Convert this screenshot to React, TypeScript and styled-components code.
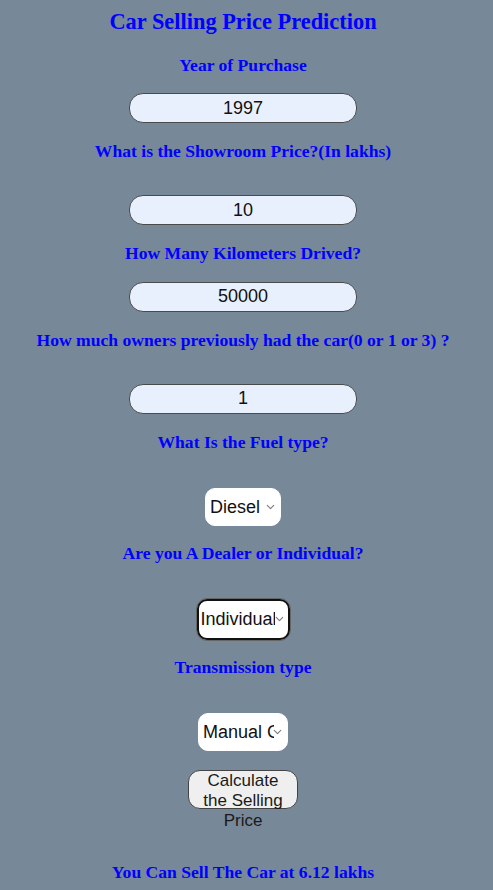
import React from 'react';
import styled, { createGlobalStyle } from 'styled-components';
import { ChevronDown } from 'lucide-react';

const GlobalStyle = createGlobalStyle`
  html, body {
    margin: 0;
    padding: 0;
    background: #778899;
  }
`;

interface DropdownProps {
  width: number;
  focused?: boolean;
  value: string;
  options: string[];
}

function Dropdown({ width, focused, value, options }: DropdownProps): JSX.Element {
  return (
    <SelectWrap>
      <Select $w={width} $focused={focused} defaultValue={value}>
        {options.map((o) => (
          <option key={o}>{o}</option>
        ))}
      </Select>
      <Chevron size={13} strokeWidth={2} />
    </SelectWrap>
  );
}

function App(): JSX.Element {
  return (
    <>
      <GlobalStyle />
      <Page>
        <Title>Car Selling Price Prediction</Title>
        <Label>Year of Purchase</Label>
        <Field value="1997" readOnly />
        <Label>What is the Showroom Price?(In lakhs)</Label>
        <Field value="10" readOnly $spaced />
        <Label>How Many Kilometers Drived?</Label>
        <Field value="50000" readOnly />
        <Label>How much owners previously had the car(0 or 1 or 3) ?</Label>
        <Field value="1" readOnly $spaced />
        <Label>What Is the Fuel type?</Label>
        <Dropdown width={76} value="Diesel" options={['Diesel', 'Petrol', 'CNG']} />
        <Label>Are you A Dealer or Individual?</Label>
        <Dropdown width={93} focused value="Individual" options={['Dealer', 'Individual']} />
        <Label>Transmission type</Label>
        <Dropdown width={90} value="Manual Car" options={['Manual Car', 'Automatic Car']} />
        <CalcButton>Calculate the Selling Price</CalcButton>
        <Result>You Can Sell The Car at 6.12 lakhs</Result>
      </Page>
    </>
  );
}

export default App;

const Page = styled.div`
  display: flex;
  flex-direction: column;
  align-items: center;
  padding: 9px 7px 0 0;
  font-family: 'Liberation Serif', 'Times New Roman', serif;
`;

const Title = styled.h2`
  margin: 0 0 19.5px;
  font-size: 22.4px;
  font-weight: bold;
  color: #0000ff;
`;

const Label = styled.h3`
  margin: 0;
  font-size: 17.6px;
  line-height: 20px;
  font-weight: bold;
  color: #0000ff;
  text-align: center;
`;

const Field = styled.input<{ $spaced?: boolean }>`
  box-sizing: border-box;
  width: 228px;
  height: 30px;
  margin: ${(p) => (p.$spaced ? '34px 0 18px' : '18.5px 0 18px')};
  border: 1px solid #4a4a4a;
  border-radius: 14px;
  background: #e8f0fe;
  font-family: 'Liberation Sans', Arial, sans-serif;
  font-size: 18px;
  color: #111;
  text-align: center;
  outline: none;
`;

const SelectWrap = styled.div`
  position: relative;
  margin: 36px 0 17px;
  display: flex;
`;

const Select = styled.select<{ $w: number; $focused?: boolean }>`
  box-sizing: border-box;
  appearance: none;
  width: ${(p) => p.$w}px;
  height: ${(p) => (p.$focused ? 41 : 38)}px;
  padding: 0 13px 0 ${(p) => (p.$focused ? 2 : 4)}px;
  border: ${(p) => (p.$focused ? '2px solid #111' : '1px solid #fff')};
  outline: ${(p) => (p.$focused ? '1px solid #666' : 'none')};
  border-radius: 10px;
  background: #fff;
  font-family: 'Liberation Sans', Arial, sans-serif;
  font-size: 18px;
  color: #111;
`;

const Chevron = styled(ChevronDown)`
  position: absolute;
  right: 4px;
  top: 50%;
  transform: translateY(-50%);
  color: #7a7a7a;
  pointer-events: none;
`;

const CalcButton = styled.button`
  box-sizing: border-box;
  width: 110px;
  height: 39px;
  margin-top: 2px;
  padding: 0 6px;
  border: 1px solid #444;
  border-radius: 12px;
  background: #efefef;
  font-family: 'Liberation Sans', Arial, sans-serif;
  font-size: 17px;
  line-height: 20px;
  color: #1a1a1a;
  display: flex;
  align-items: flex-start;
  justify-content: center;
`;

const Result = styled.h3`
  margin: 53px 0 0;
  font-size: 17.6px;
  font-weight: bold;
  color: #0000ff;
`;
